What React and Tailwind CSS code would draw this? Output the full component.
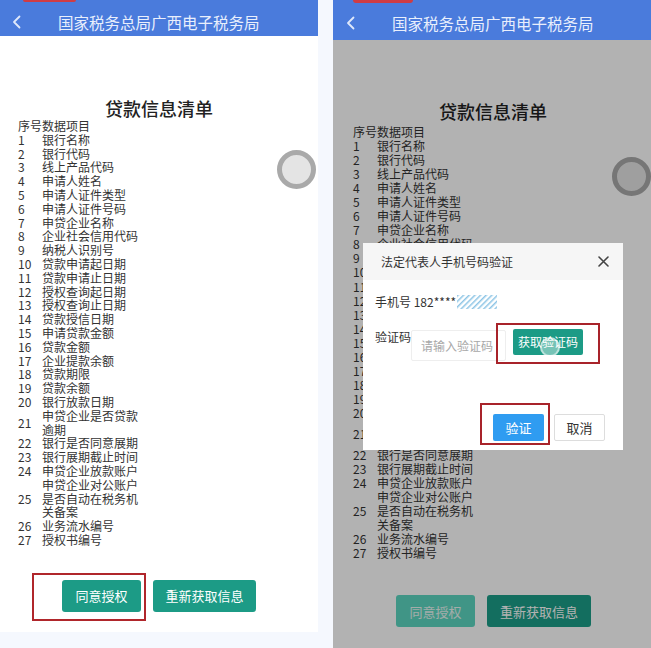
import React from "react";

const FONT = { fontFamily: '"Noto Sans CJK SC", "Noto Sans", sans-serif' };

const rows = [
  ["1", "银行名称"],
  ["2", "银行代码"],
  ["3", "线上产品代码"],
  ["4", "申请人姓名"],
  ["5", "申请人证件类型"],
  ["6", "申请人证件号码"],
  ["7", "申贷企业名称"],
  ["8", "企业社会信用代码"],
  ["9", "纳税人识别号"],
  ["10", "贷款申请起日期"],
  ["11", "贷款申请止日期"],
  ["12", "授权查询起日期"],
  ["13", "授权查询止日期"],
  ["14", "贷款授信日期"],
  ["15", "申请贷款金额"],
  ["16", "贷款金额"],
  ["17", "企业提款余额"],
  ["18", "贷款期限"],
  ["19", "贷款余额"],
  ["20", "银行放款日期"],
  ["21", "申贷企业是否贷款逾期"],
  ["22", "银行是否同意展期"],
  ["23", "银行展期截止时间"],
  ["24", "申贷企业放款账户"],
  ["25", "申贷企业对公账户是否自动在税务机关备案"],
  ["26", "业务流水编号"],
  ["27", "授权书编号"],
];

function Chevron() {
  return (
    <svg width="9" height="14" viewBox="0 0 9 14" fill="none">
      <path d="M7.5 1.5 L2 7 L7.5 12.5" stroke="#dfe8fb" strokeWidth="1.8" strokeLinecap="round" strokeLinejoin="round" />
    </svg>
  );
}

function Header({ tall }) {
  return (
    <div
      className={
        tall
          ? "relative h-[40px] bg-[#4a7bdc] flex items-start pt-[9px] shrink-0"
          : "relative h-[36px] bg-[#4a7bdc] flex items-start pt-[8px] shrink-0"
      }
    >
      <div
        className={
          tall
            ? "absolute left-[20px] top-0 w-[60px] h-[3px] rounded-b-[3px] bg-[#cf3c44]"
            : "absolute left-[23px] top-0 w-[53px] h-[2px] rounded-b-[3px] bg-[#cf3c44]"
        }
      />
      <div className={tall ? "w-[59px] h-[28px] flex items-center pl-[13px]" : "w-[58px] h-[28px] flex items-center pl-[12px]"}>
        <Chevron />
      </div>
      <div className="h-[28px] leading-[28px] text-[15.5px] text-[#e9effc]">
        国家税务总局广西电子税务局
      </div>
    </div>
  );
}

function List({ right }) {
  const lh = right ? "leading-[14.05px]" : "leading-[13.8px]";
  return (
    <div className={right ? "pl-[20px] mt-[3px] text-[12px] text-[#333]" : "pl-[18px] text-[12px] text-[#333]"}>
      <div className={lh}>序号数据项目</div>
      {rows.map(([n, t]) => (
        <div key={n} className={"flex items-center " + lh}>
          <div className="w-[24px] shrink-0">{n}</div>
          <div className="w-[100px]">{t}</div>
        </div>
      ))}
    </div>
  );
}

function Buttons({ right }) {
  return (
    <div className={right ? "flex justify-center gap-[12px] mt-[35px] pl-[3px]" : "flex justify-center gap-[12px] mt-[33px]"}>
      <div
        className={
          right
            ? "w-[79px] h-[32px] rounded-[3px] bg-[#5cd6c1] text-[#eaf6f3] text-[13px] flex items-center justify-center"
            : "w-[79px] h-[32px] rounded-[3px] bg-[#1c9b86] text-white text-[13px] flex items-center justify-center"
        }
      >
        同意授权
      </div>
      <div
        className={
          right
            ? "w-[104px] h-[32px] rounded-[3px] bg-[#1c9e88] text-white text-[13px] flex items-center justify-center"
            : "w-[103px] h-[32px] rounded-[3px] bg-[#1c9b86] text-white text-[13px] flex items-center justify-center"
        }
      >
        重新获取信息
      </div>
    </div>
  );
}

function Body({ right }) {
  return (
    <div className="relative flex-1">
      <div
        className={
          right
            ? "mt-[60px] h-[22px] leading-[22px] text-center text-[18px] text-[#222] font-medium pl-[2px]"
            : "mt-[61px] h-[22px] leading-[22px] text-center text-[18px] text-[#222] font-medium"
        }
      >
        贷款信息清单
      </div>
      <List right={right} />
      <Buttons right={right} />
      <div
        className={
          right
            ? "absolute left-[279px] top-[117px] w-[39px] h-[39px] rounded-full border-[5px] border-[#a9a9a9] bg-[#e4e4e4]"
            : "absolute left-[277px] top-[114px] w-[39px] h-[39px] rounded-full border-[5px] border-[#a9a9a9] bg-[#e4e4e4]"
        }
      />
    </div>
  );
}

function Hatch() {
  return (
    <svg width="40" height="14" viewBox="0 0 40 14" className="ml-[1px]">
      <defs>
        <pattern id="hp" width="4" height="4" patternUnits="userSpaceOnUse" patternTransform="rotate(45)">
          <rect width="1.5" height="4" fill="#8ec5e6" />
        </pattern>
      </defs>
      <rect width="40" height="14" fill="url(#hp)" />
    </svg>
  );
}

function Dialog() {
  return (
    <div className="absolute left-[30px] top-[243px] w-[260px] h-[207px] bg-white flex flex-col">
      <div className="h-[37px] shrink-0 bg-[#f6f6f6] flex items-center justify-between pl-[18px] pr-[14px]">
        <span className="text-[12px] text-[#333]">法定代表人手机号码验证</span>
        <svg width="11" height="11" viewBox="0 0 11 11">
          <path d="M1 1 L10 10 M10 1 L1 10" stroke="#444" strokeWidth="1.6" strokeLinecap="round" />
        </svg>
      </div>
      <div className="pl-[12px] flex items-center text-[12px] text-[#333] h-[44px] shrink-0">
        <span>手机号 182****</span>
        <Hatch />
      </div>
      <div className="pl-[12px] flex items-start mt-[6px]">
        <span className="text-[12px] text-[#333] leading-[15px] mt-[-1px] w-[36px] shrink-0 whitespace-nowrap">验证码</span>
        <div className="w-[95px] h-[31px] shrink-0 border border-[#eeeeee] rounded-[2px] flex items-center pl-[9px] text-[12px] text-[#a8a8a8] whitespace-nowrap">
          请输入验证码
        </div>
        <div className="ml-[7px] mt-[-1px] w-[70px] h-[26px] shrink-0 rounded-[2px] bg-[#1c9b86] text-white text-[12px] flex items-center justify-center">
          获取验证码
        </div>
      </div>
      <div className="flex justify-end gap-[10px] pr-[18px] mt-auto mb-[9px]">
        <div className="w-[51px] h-[27px] rounded-[2px] bg-[#2f9cf1] text-white text-[13px] flex items-center justify-center">
          验证
        </div>
        <div className="w-[51px] h-[27px] rounded-[2px] border border-[#dddddd] bg-white text-[#333] text-[13px] flex items-center justify-center">
          取消
        </div>
      </div>
    </div>
  );
}

export default function App() {
  return (
    <div className="w-[651px] h-[648px] bg-[#f5f8fe] flex gap-[15px] overflow-hidden" style={FONT}>
      <div className="relative w-[318px] h-[632px] bg-white flex flex-col">
        <Header />
        <Body />
        <div className="absolute left-[32px] top-[573px] w-[114px] h-[48px] border-2 border-[#b0262b]" />
      </div>
      <div className="relative w-[318px] h-[648px] bg-white flex flex-col">
        <Header tall />
        <Body right />
        <div className="absolute left-0 right-0 top-[40px] bottom-0 bg-black/30" />
        <Dialog />
        <div className="absolute left-[207px] top-[337px] w-[20px] h-[20px] rounded-full bg-white/40 border-2 border-white/50" />
        <div className="absolute left-[163px] top-[323px] w-[104px] h-[41px] border-2 border-[#a8232a]" />
        <div className="absolute left-[147px] top-[403px] w-[70px] h-[42px] border-2 border-[#a8232a]" />
      </div>
    </div>
  );
}
